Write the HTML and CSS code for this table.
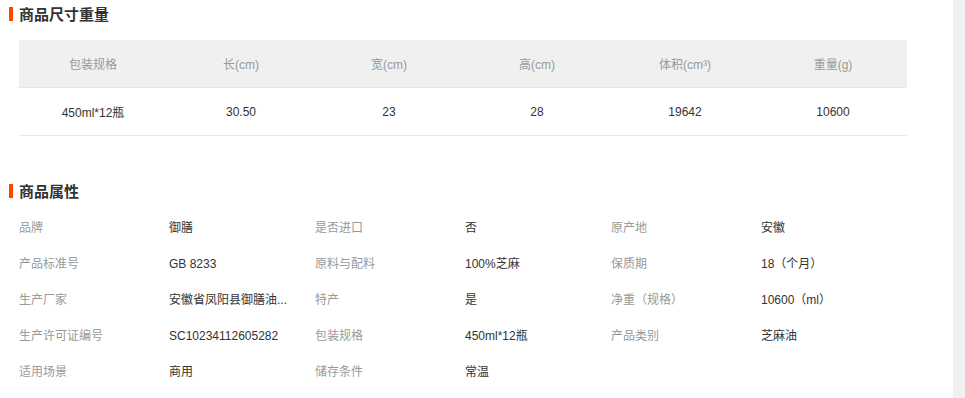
FILE: index.html
```html
<!DOCTYPE html>
<html lang="zh-CN">
<head>
<meta charset="utf-8">
<title>商品尺寸重量</title>
<link rel="stylesheet" href="styles.css">
</head>
<body>
<div class="page">
  <main class="content">
    <section class="block block-size">
      <h2 class="title">商品尺寸重量</h2>
      <table class="size-table">
        <thead>
          <tr>
            <th>包装规格</th>
            <th>长(cm)</th>
            <th>宽(cm)</th>
            <th>高(cm)</th>
            <th>体积(cm³)</th>
            <th>重量(g)</th>
          </tr>
        </thead>
        <tbody>
          <tr>
            <td>450ml*12瓶</td>
            <td>30.50</td>
            <td>23</td>
            <td>28</td>
            <td>19642</td>
            <td>10600</td>
          </tr>
        </tbody>
      </table>
    </section>
    <section class="block block-attr">
      <h2 class="title">商品属性</h2>
      <div class="attr-grid">
        <span class="label">品牌</span><span class="value">御膳</span>
        <span class="label">是否进口</span><span class="value">否</span>
        <span class="label">原产地</span><span class="value">安徽</span>

        <span class="label">产品标准号</span><span class="value">GB 8233</span>
        <span class="label">原料与配料</span><span class="value">100%芝麻</span>
        <span class="label">保质期</span><span class="value">18（个月）</span>

        <span class="label">生产厂家</span><span class="value value-clip">安徽省凤阳县御膳油...</span>
        <span class="label">特产</span><span class="value">是</span>
        <span class="label">净重（规格）</span><span class="value">10600（ml）</span>

        <span class="label">生产许可证编号</span><span class="value">SC10234112605282</span>
        <span class="label">包装规格</span><span class="value">450ml*12瓶</span>
        <span class="label">产品类别</span><span class="value">芝麻油</span>

        <span class="label">适用场景</span><span class="value">商用</span>
        <span class="label">储存条件</span><span class="value">常温</span>
      </div>
    </section>
  </main>
  <div class="rail"></div>
</div>
</body>
</html>
```
FILE: styles.css
```css
html, body {
  margin: 0;
  padding: 0;
  background: #fff;
}

body {
  font-family: "Liberation Sans", "Noto Sans CJK SC", sans-serif;
  font-size: 12px;
  color: #333;
}

.page {
  display: flex;
  width: 965px;
  height: 398px;
  overflow: hidden;
}

.content {
  flex: 1;
  min-width: 0;
}

.rail {
  width: 12px;
  flex: none;
  background: #f0f0f0;
}

.title {
  display: flex;
  align-items: center;
  gap: 6px;
  margin: 0;
  padding-left: 9px;
  height: 20px;
  font-family: "Noto Sans CJK SC", sans-serif;
  font-size: 15px;
  font-weight: bold;
  line-height: 20px;
  color: #333;
}

.title::before {
  content: "";
  width: 4px;
  height: 14px;
  background: #ff4400;
  flex: none;
}

.block-size {
  padding-top: 4px;
}

.size-table {
  margin: 16px 0 0 19px;
  width: 888px;
  border-collapse: collapse;
  table-layout: fixed;
}

.size-table th,
.size-table td {
  padding: 0;
  text-align: center;
  font-weight: normal;
  font-size: 12px;
}

.size-table th {
  height: 47px;
  background: #f0f0f0;
  color: #999;
  border-bottom: 1px solid #e6e6e6;
}

.size-table td {
  height: 47px;
  color: #333;
  border-bottom: 1px solid #e8e8e8;
}

.block-attr {
  margin-top: 45px;
}

.attr-grid {
  display: grid;
  grid-template-columns: 150px 146px 150px 146px 150px 146px;
  grid-auto-rows: 36px;
  margin: 9px 0 0 19px;
  width: 888px;
  line-height: 36px;
}

.label {
  color: #999;
  white-space: nowrap;
}

.value {
  color: #333;
  white-space: nowrap;
}

.value-clip {
  letter-spacing: 0;
}
```
